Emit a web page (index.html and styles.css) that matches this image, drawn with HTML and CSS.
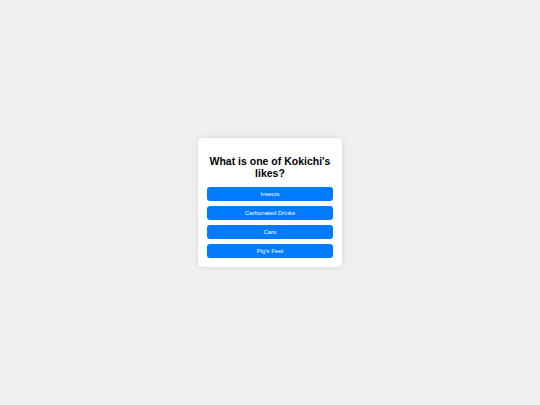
FILE: index.html
```html
<!DOCTYPE html>
<html>
<head>
<meta charset="utf-8">
<link rel="stylesheet" href="styles.css">
</head>
<body>
<div class="card">
  <h1 class="question">What is one of Kokichi's likes?</h1>
  <div class="options">
    <button class="opt">Insects</button>
    <button class="opt">Carbonated Drinks</button>
    <button class="opt">Cars</button>
    <button class="opt">Pig's Feet</button>
  </div>
</div>
</body>
</html>
```
FILE: styles.css
```css
html, body { margin: 0; padding: 0; }
body {
  background: #f0f0f0;
  height: 100vh;
  display: flex;
  align-items: center;
  justify-content: center;
  font-family: "Liberation Sans", Arial, sans-serif;
}
.card {
  background: #fff;
  width: 126px;
  padding: 9px;
  border-radius: 4px;
  box-shadow: 0 0 6px rgba(0,0,0,0.12);
  text-align: center;
}
.question {
  font-size: 10.5px;
  line-height: 12px;
  font-weight: bold;
  color: #000;
  margin: 8px 0 8px;
}
.options {
  display: flex;
  flex-direction: column;
  gap: 5px;
}
.opt {
  display: block;
  width: 100%;
  height: 14px;
  padding: 0;
  border: none;
  border-radius: 3px;
  background: #007bff;
  color: #fff;
  font-family: "Liberation Sans", Arial, sans-serif;
  font-size: 6px;
  line-height: 14px;
}
```
